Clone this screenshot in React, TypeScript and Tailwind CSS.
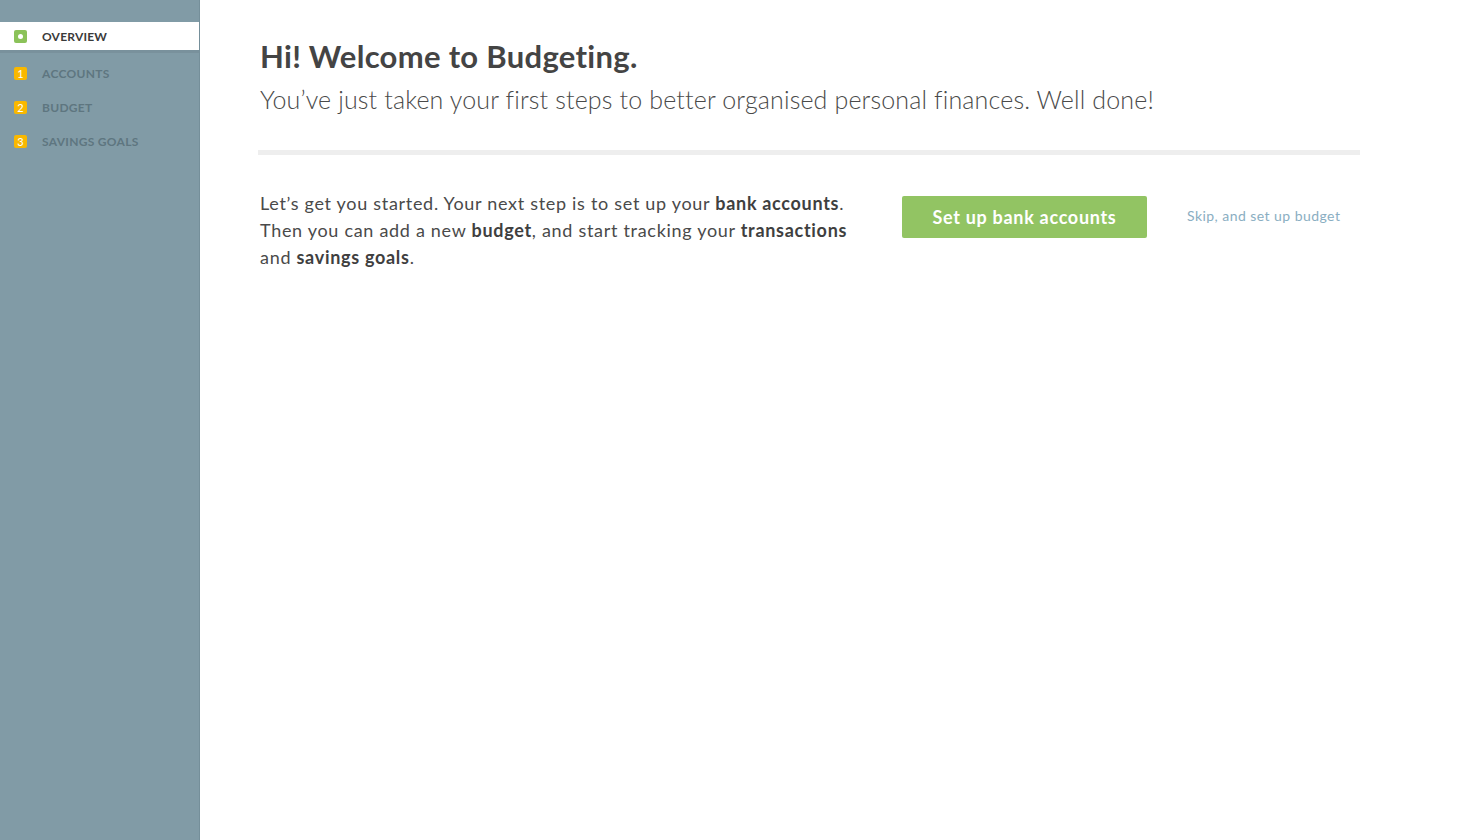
import { ReactNode } from "react";

const NAV = [
  { label: "Accounts", badge: "1" },
  { label: "Budget", badge: "2" },
  { label: "Savings Goals", badge: "3" },
];

function B({ children }: { children: ReactNode }) {
  return <span className="font-bold text-[#3f3f3f]">{children}</span>;
}

export default function App() {
  return (
    <div className="flex h-[840px] w-full bg-white font-['Lato',sans-serif]">
      <aside className="w-[200px] shrink-0 border-r border-[#758f9a] bg-[#819ba6] pt-[22px]">
        <div className="flex h-[28px] items-center bg-white pl-[14px] pt-[1px] shadow-[0_3px_0_rgba(0,0,0,0.06)]">
          <span className="flex h-[13px] w-[13px] items-center justify-center rounded-[2px] bg-[#8bc259]">
            <span className="h-[5px] w-[5px] rounded-full bg-white" />
          </span>
          <span className="ml-[15px] text-[12px] font-bold uppercase tracking-[0.2px] text-[#3a3a3a]">
            Overview
          </span>
        </div>
        <ul className="mt-[17px] flex flex-col gap-[21px]">
          {NAV.map((item) => (
            <li key={item.label} className="flex h-[13px] items-center pl-[14px]">
              <span className="flex h-[13px] w-[13px] items-center justify-center rounded-[2px] bg-[#f9b800] text-[11px] leading-none text-white">
                {item.badge}
              </span>
              <span className="ml-[15px] text-[12px] font-bold uppercase tracking-[0.3px] text-[#5e7680]">
                {item.label}
              </span>
            </li>
          ))}
        </ul>
      </aside>

      <main className="flex-1 pl-[58px] pr-[100px] pt-[37px]">
        <h1 className="pl-[2px] text-[31px] font-bold leading-[38px] tracking-[0.3px] text-[#444]">
          Hi! Welcome to Budgeting.
        </h1>
        <p className="mt-[8px] pl-[2px] text-[25px] font-light leading-[32px] tracking-[0.15px] text-[#4a4a4a]">
          You’ve just taken your first steps to better organised personal finances. Well done!
        </p>
        <div className="mt-[35px] h-[5px] w-[1102px] bg-[#eeeeee]" />

        <div className="mt-[35px] flex items-start pl-[2px]">
          <p className="w-[610px] shrink-0 text-[18px] leading-[27px] tracking-[0.7px] text-[#4a4a4a]">
            Let’s get you started. Your next step is to set up your <B>bank accounts</B>.
            <br />
            Then you can add a new <B>budget</B>, and start tracking your <B>transactions</B>
            <br />
            and <B>savings goals</B>.
          </p>
          <button className="ml-[32px] mt-[6px] h-[42px] w-[245px] shrink-0 rounded-[2px] bg-[#92c463] text-[18px] font-bold tracking-[0.7px] text-white">
            Set up bank accounts
          </button>
          <a className="ml-[40px] mt-[15px] text-[14px] tracking-[0.45px] text-[#8aaec2]" href="#">
            Skip, and set up budget
          </a>
        </div>
      </main>
    </div>
  );
}
